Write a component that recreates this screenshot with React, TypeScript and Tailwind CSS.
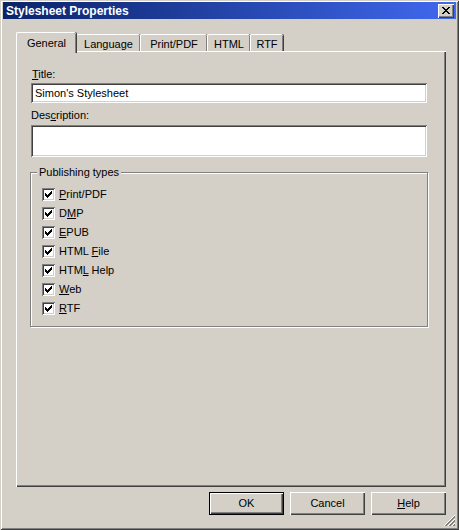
import React from "react";

const raised =
  "shadow-[inset_1px_1px_0_#ffffff,inset_-1px_-1px_0_#404040,inset_-2px_-2px_0_#808080]";
const sunken =
  "shadow-[inset_1px_1px_0_#808080,inset_-1px_-1px_0_#ffffff,inset_2px_2px_0_#404040,inset_-2px_-2px_0_#d4d0c8]";

function U({ children }: { children: React.ReactNode }) {
  return <span className="underline underline-offset-[1px]">{children}</span>;
}

function Tab({
  width,
  selected,
  children,
}: {
  width: string;
  selected?: boolean;
  children: React.ReactNode;
}) {
  if (selected) {
    return (
      <div
        className={`${width} h-[21px] -mb-[2px] relative z-10 bg-[#d4d0c8] rounded-t-[2px] border-t border-l border-white shadow-[inset_-1px_0_0_#808080,1px_0_0_#404040] flex items-start justify-center pt-[2px]`}
      >
        {children}
      </div>
    );
  }
  return (
    <div
      className={`${width} h-[17px] bg-[#d4d0c8] rounded-t-[2px] border-t border-l border-white shadow-[inset_-1px_0_0_#808080,1px_0_0_#404040] flex items-start justify-center pt-[1px]`}
    >
      {children}
    </div>
  );
}

function Check({ children }: { children: React.ReactNode }) {
  return (
    <div className="h-[19px] flex items-start gap-[4px]">
      <div className={`w-[13px] h-[13px] bg-white ${sunken} flex items-center justify-center`}>
        <svg width="7" height="7" viewBox="0 0 7 7" shapeRendering="crispEdges">
          <path
            d="M6 0h1v3h-1zM5 1h1v3h-1zM4 2h1v3h-1zM3 3h1v3h-1zM2 4h1v3h-1zM1 3h1v3h-1zM0 2h1v3h-1z"
            fill="#000"
          />
        </svg>
      </div>
      <span className="leading-[13px]">{children}</span>
    </div>
  );
}

function Button({
  children,
  isDefault,
}: {
  children: React.ReactNode;
  isDefault?: boolean;
}) {
  if (isDefault) {
    return (
      <div className="w-[75px] h-[23px] border border-black">
        <div
          className={`w-full h-full bg-[#d4d0c8] ${raised} flex items-center justify-center`}
        >
          {children}
        </div>
      </div>
    );
  }
  return (
    <div
      className={`w-[75px] h-[23px] bg-[#d4d0c8] ${raised} flex items-center justify-center`}
    >
      {children}
    </div>
  );
}

export default function App() {
  return (
    <div className="w-[459px] h-[530px] bg-[#d4d0c8] relative overflow-hidden font-['Liberation_Sans',Arial,sans-serif] text-[11px] text-black shadow-[inset_1px_1px_0_#d4d0c8,inset_-1px_-1px_0_#404040,inset_2px_2px_0_#ffffff,inset_-2px_-2px_0_#808080]">
      <div className="pt-[2px] px-[3px]">
        {/* Title bar */}
        <div className="h-[17px] bg-gradient-to-r from-[#0a246a] to-[#4169f0] flex items-center justify-between pl-[3px] pr-[2px]">
          <span className="text-white font-bold text-[12px] leading-none">
            Stylesheet Properties
          </span>
          <div
            className={`w-[16px] h-[14px] bg-[#d4d0c8] ${raised} flex items-center justify-center`}
          >
            <svg width="8" height="7" viewBox="0 0 8 7" shapeRendering="crispEdges">
              <path
                d="M0 0h2v1h-2zM6 0h2v1h-2zM1 1h2v1h-2zM5 1h2v1h-2zM2 2h4v1h-4zM3 3h2v1h-2zM2 4h4v1h-4zM1 5h2v1h-2zM5 5h2v1h-2zM0 6h2v1h-2zM6 6h2v1h-2z"
                fill="#000"
              />
            </svg>
          </div>
        </div>
      </div>

      <div className="pl-[16px] mt-[13px]">
        {/* Tabs */}
        <div className="flex items-end h-[19px]">
          <Tab width="w-[60px]" selected>
            General
          </Tab>
          <Tab width="w-[64px]">Language</Tab>
          <Tab width="w-[67px]">Print/PDF</Tab>
          <Tab width="w-[43px]">HTML</Tab>
          <Tab width="w-[33px]">RTF</Tab>
        </div>

        {/* Panel */}
        <div className={`w-[430px] h-[436px] bg-[#d4d0c8] ${raised} pt-[17px]`}>
          <div className="ml-[16px] leading-[13px]">
            <U>T</U>itle:
          </div>
          <div
            className={`ml-[15px] mt-[2px] w-[396px] h-[20px] bg-white ${sunken} flex items-center pl-[4px]`}
          >
            Simon's Stylesheet
          </div>
          <div className="ml-[15px] mt-[6px] leading-[13px]">
            Des<U>c</U>ription:
          </div>
          <div className={`ml-[15px] mt-[3px] w-[396px] h-[32px] bg-white ${sunken}`} />

          {/* Group box */}
          <div className="ml-[14px] mt-[15px] w-[398px] h-[155px] relative border border-[#808080] shadow-[inset_1px_1px_0_#ffffff,1px_1px_0_#ffffff] pl-[11px] pt-[15px]">
            <span className="absolute -top-[7px] left-[6px] px-[2px] bg-[#d4d0c8] leading-[13px]">
              Publishing types
            </span>
            <Check>
              <U>P</U>rint/PDF
            </Check>
            <Check>
              D<U>M</U>P
            </Check>
            <Check>
              <U>E</U>PUB
            </Check>
            <Check>
              HTML <U>F</U>ile
            </Check>
            <Check>
              HTM<U>L</U> Help
            </Check>
            <Check>
              <U>W</U>eb
            </Check>
            <Check>
              <U>R</U>TF
            </Check>
          </div>
        </div>

        {/* Buttons */}
        <div className="w-[430px] flex justify-end gap-[6px] mt-[5px]">
          <Button isDefault>OK</Button>
          <Button>Cancel</Button>
          <Button>
            <U>H</U>elp
          </Button>
        </div>
      </div>

      {/* Resize grip */}
      <svg
        className="absolute right-[3px] bottom-[3px]"
        width="12"
        height="12"
        viewBox="0 0 12 12"
        shapeRendering="crispEdges"
      >
        <path d="M11 1L1 11M11 5L5 11M11 9L9 11" stroke="#808080" strokeWidth="1" />
        <path d="M11 2L2 11M11 6L6 11M11 10L10 11" stroke="#808080" strokeWidth="1" />
        <path d="M11 0L0 11M11 4L4 11M11 8L8 11" stroke="#ffffff" strokeWidth="1" />
      </svg>
    </div>
  );
}
